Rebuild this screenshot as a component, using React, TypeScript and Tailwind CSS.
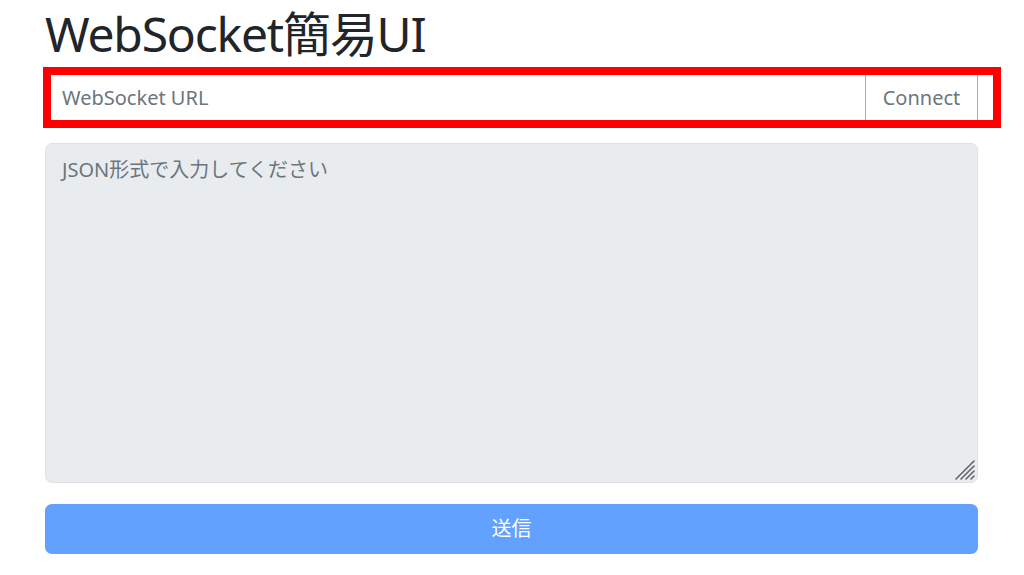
export default function App() {
  const font = "font-['Noto_Sans','Noto_Sans_CJK_JP',sans-serif]";
  return (
    <div className={`${font} w-[1024px] h-[575px] bg-white text-[#212529] overflow-hidden`}>
      <div className="pl-[45px] pr-[46px] pt-[4px]">
        <h1 className="text-[48px] leading-[59px] font-normal tracking-[-1.2px]">
          WebSocket簡易UI
        </h1>
      </div>

      {/* highlighted connection row */}
      <div className="mt-[4px] ml-[43px] w-[958px] h-[61px] border-[8px] border-[#ff0000] bg-white flex">
        <input
          type="text"
          placeholder="WebSocket URL"
          className="flex-1 min-w-0 h-full pl-[11px] text-[20px] text-[#212529] placeholder:text-[#6c757d] outline-none bg-white"
        />
        <button className="w-[113px] h-full border-x border-[#a5acb3] text-[20px] text-[#6c757d] bg-white">
          Connect
        </button>
        <div className="w-[15px]" />
      </div>

      <div className="pl-[45px] pr-[46px]">
        <div className="relative mt-[15px]">
          <textarea
            disabled
            placeholder="JSON形式で入力してください"
            className="block w-full h-[340px] rounded-[7px] border border-[#dee2e6] bg-[#e9ecef] px-[16px] pt-[11px] pb-[8px] text-[20px] leading-[30px] placeholder:text-[#6c757d] resize-none"
          />
          {/* resize grip */}
          <svg
            className="absolute right-[2px] bottom-[2px]"
            width="22"
            height="22"
            viewBox="0 0 22 22"
          >
            <g stroke="#5f6368" strokeWidth="1.6" strokeLinecap="round">
              <line x1="2" y1="20" x2="20" y2="2" />
              <line x1="7" y1="20" x2="20" y2="7" />
              <line x1="12" y1="20" x2="20" y2="12" />
              <line x1="17" y1="20" x2="20" y2="17" />
            </g>
          </svg>
        </div>
        <button
          disabled
          className="mt-[21px] w-full h-[50px] rounded-[7px] bg-[#62a1fe] text-white text-[20px]"
        >
          送信
        </button>
      </div>
    </div>
  );
}
